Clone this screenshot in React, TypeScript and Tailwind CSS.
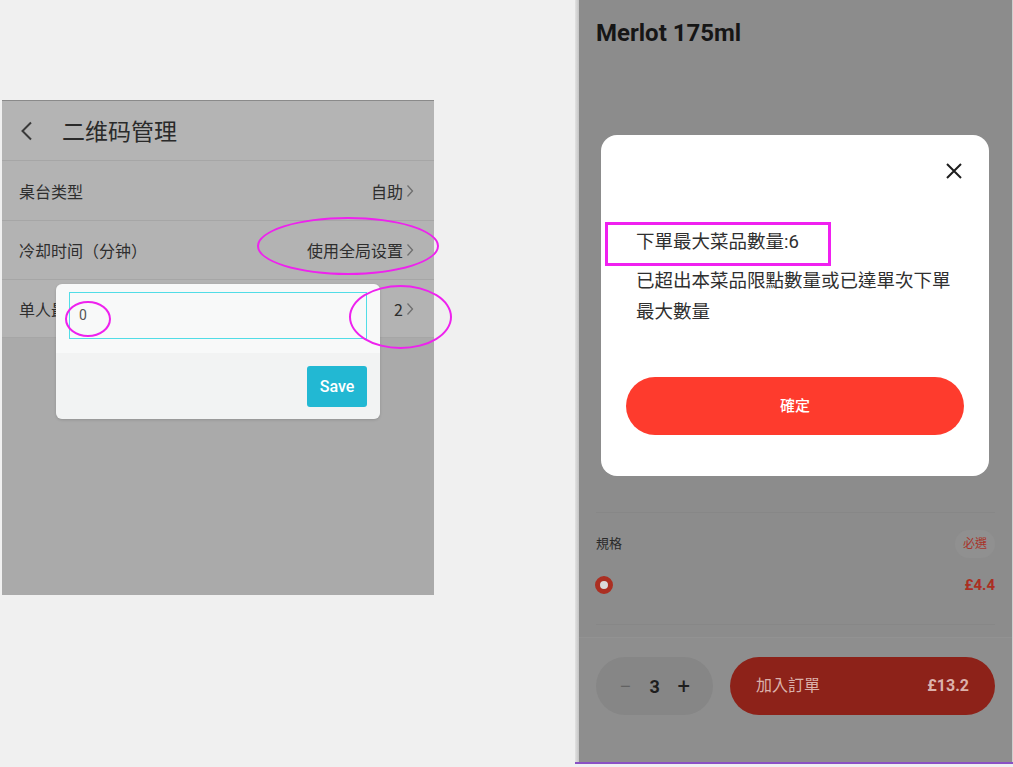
const cjkSc = { fontFamily: '"Noto Sans CJK SC", Roboto, sans-serif' };
const cjkTc = { fontFamily: 'Roboto, "Noto Sans CJK TC", sans-serif' };

const Chevron = () => (
  <svg width="8" height="14" viewBox="0 0 8 14" className="ml-[3px]">
    <path d="M1.5 1.5 L6.5 7 L1.5 12.5" fill="none" stroke="#6e6e6e" strokeWidth="1.3" />
  </svg>
);

const SettingRow = ({ label, value, h }: { label: string; value: string; h: string }) => (
  <div className={`flex items-center justify-between border-b border-[#a6a6a6] pl-[17px] pr-[20px] ${h}`}>
    <span className="text-[16px] text-[#2e2e2e]">{label}</span>
    <span className="flex items-center text-[16px] text-[#2e2e2e]">
      {value}
      <Chevron />
    </span>
  </div>
);

const QrSettings = () => (
  <div className="relative flex h-[495px] w-[432px] flex-col border-t border-[#8a8a8a] bg-[#aaaaaa]" style={cjkSc}>
    <div className="flex h-[60px] items-center border-b border-[#a6a6a6] bg-[#b4b4b4] pl-[18px]">
      <svg width="14" height="20" viewBox="0 0 14 20">
        <path d="M11 1.5 L2.5 10 L11 18.5" fill="none" stroke="#3a3a3a" strokeWidth="2" />
      </svg>
      <span className="ml-[28px] text-[23px] text-[#2a2a2a]">二维码管理</span>
    </div>
    <div className="bg-[#b3b3b3]">
      <SettingRow label="桌台类型" value="自助" h="h-[60px]" />
      <SettingRow label="冷却时间（分钟）" value="使用全局设置" h="h-[59px]" />
      <SettingRow label="单人最大" value="2" h="h-[58px]" />
    </div>

    {/* edit dialog */}
    <div className="absolute left-[54px] top-[183px] flex h-[135px] w-[324px] flex-col overflow-hidden rounded-[6px] shadow-[0_1px_3px_rgba(0,0,0,0.15)]">
      <div className="h-[69px] bg-[#f8f9f9] px-[13px] pt-[8px]">
        <div className="flex h-[47px] items-center border-[1.5px] border-[#52dde7] pl-[9px] text-[14px] text-[#555]" style={{ fontFamily: 'Roboto, sans-serif' }}>
          0
        </div>
      </div>
      <div className="flex flex-1 justify-end bg-[#f2f3f3] pr-[13px] pt-[13px]">
        <button className="h-[41px] w-[60px] rounded-[3px] bg-[#22b8d3] text-[16px] font-medium text-white" style={{ fontFamily: 'Roboto, sans-serif' }}>
          Save
        </button>
      </div>
    </div>
  </div>
);

const ProductSheet = () => (
  <div className="flex h-[767px] w-[438px] flex-col">
    <div className="flex h-[764px] border-b-2 border-[#8a52c4]">
      <div className="w-[4px] bg-gradient-to-r from-[#e2e2e2] to-[#c4c4c4]" />
      <div className="relative flex flex-1 flex-col border-r border-[#cfcfcf] bg-[#8c8c8c]" style={cjkTc}>
        <div className="h-[512px] px-[17px] pt-[15px]">
          <h1 className="text-[24px] font-bold text-[#161616]">Merlot 175ml</h1>
        </div>
        <div className="mx-[17px] border-t border-[#878787] pt-[16px]">
          <div className="flex h-[30px] items-center justify-between">
            <span className="text-[13px] text-[#2a2a2a]">規格</span>
            <span className="flex h-[28px] items-center rounded-full bg-[#909090] px-[8px] text-[12px] text-[#a8342a]">必選</span>
          </div>
          <div className="mt-[14px] flex h-[24px] items-center justify-between">
            <span className="ml-[-1px] h-[18px] w-[18px] rounded-full border-[5px] border-[#ab2f22] bg-[#dadada]" />
            <span className="text-[15px] font-bold text-[#ab2f22]">£4.4</span>
          </div>
          <div className="mt-[27px] border-t border-[#878787]" />
        </div>
        <div className="mt-[12px] flex flex-1 gap-[17px] border-t border-[#929292] bg-[#8e8e8e] px-[17px] pt-[19px]">
          <div className="flex h-[58px] w-[117px] items-center justify-around rounded-full bg-[#868686] px-[14px]">
            <span className="text-[22px] font-light text-[#5a5a5a]">−</span>
            <span className="text-[18px] font-bold text-[#1e1e1e]">3</span>
            <span className="text-[22px] text-[#1e1e1e]">+</span>
          </div>
          <div className="flex h-[58px] flex-1 items-center justify-between rounded-full bg-[#8d2219] px-[26px] text-[16px] text-[#dbb1ab]">
            <span>加入訂單</span>
            <span className="font-bold">£13.2</span>
          </div>
        </div>

        {/* limit modal */}
        <div className="absolute left-[22px] top-[135px] flex h-[341px] w-[388px] flex-col rounded-[16px] bg-white">
          <div className="flex justify-end pr-[27px] pt-[28px]">
            <svg width="16" height="16" viewBox="0 0 16 16">
              <path d="M1 1 L15 15 M15 1 L1 15" stroke="#1e1e1e" strokeWidth="2" />
            </svg>
          </div>
          <div className="mt-[48px] pl-[35px] pr-[30px] text-[18.5px] leading-[31px] text-[#2f2f2f]">
            <p>下單最大菜品數量:6</p>
            <p className="mt-[8px]">已超出本菜品限點數量或已達單次下單最大數量</p>
          </div>
          <button className="mx-[25px] mt-[49px] h-[58px] rounded-full bg-[#fe3b2d] text-[15px] font-medium text-white">
            確定
          </button>
        </div>
      </div>
    </div>
  </div>
);

export default function App() {
  return (
    <div className="relative flex h-[767px] w-[1013px] overflow-hidden bg-[#f0f0f0]">
      <div className="pl-[2px] pt-[100px]">
        <QrSettings />
      </div>
      <div className="ml-[141px]">
        <ProductSheet />
      </div>

      {/* annotations */}
      <div className="absolute left-[257px] top-[217px] h-[58px] w-[182px] rounded-[50%] border-[2.5px] border-[#ee22ee]" />
      <div className="absolute left-[349px] top-[285px] h-[64px] w-[103px] rounded-[50%] border-[2.5px] border-[#ee22ee]" />
      <div className="absolute left-[65px] top-[301px] h-[36px] w-[46px] rounded-[50%] border-[2.5px] border-[#ee22ee]" />
      <div className="absolute left-[605px] top-[222px] h-[44px] w-[226px] border-[3px] border-[#f020f0]" />
    </div>
  );
}
